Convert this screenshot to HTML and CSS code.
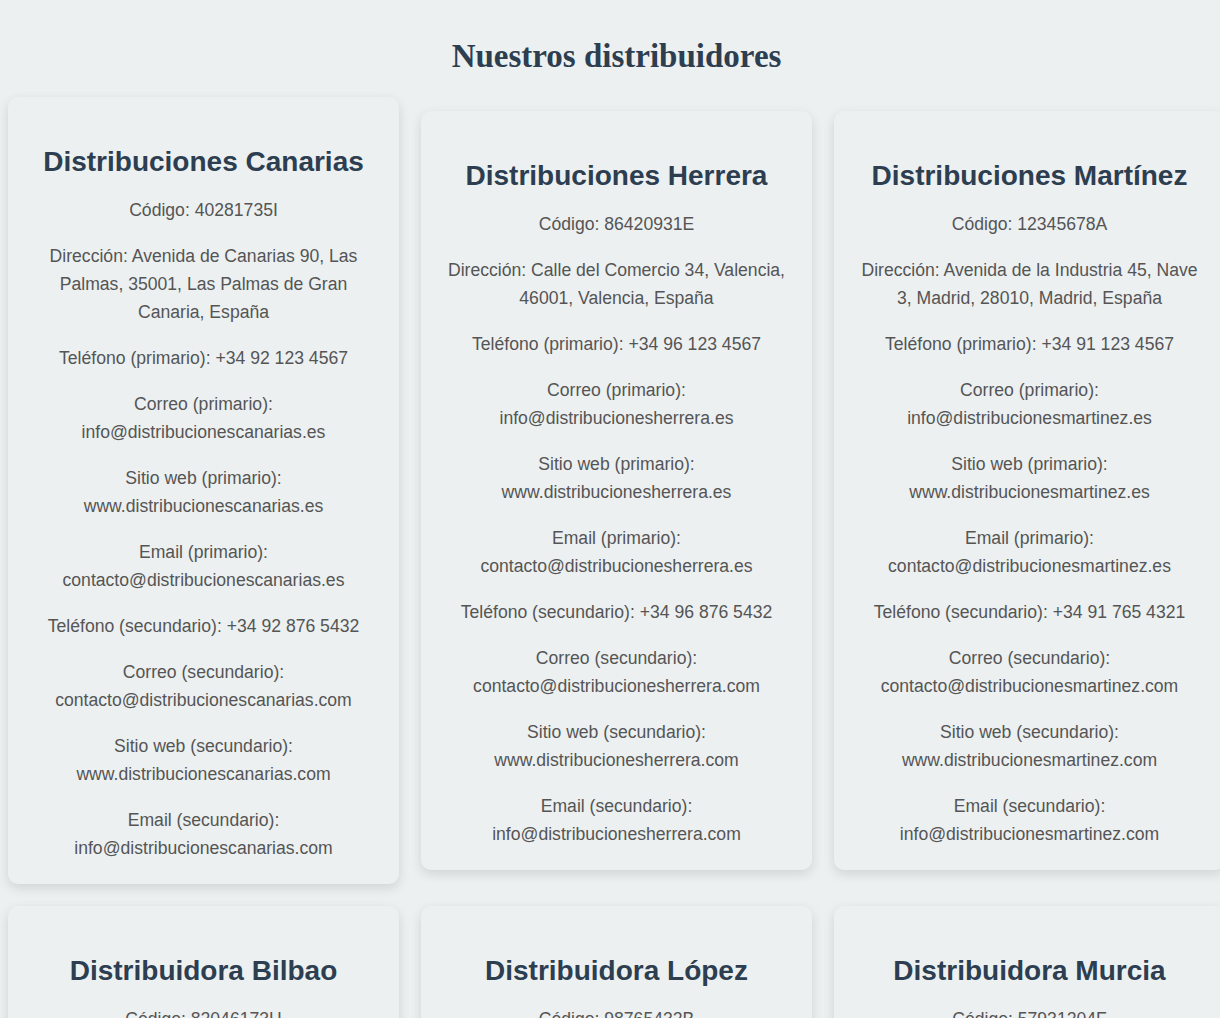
FILE: index.html
```html
<!DOCTYPE html>
<html lang="es">
<head>
<meta charset="utf-8">
<title>Nuestros distribuidores</title>
<link rel="stylesheet" href="styles.css">
</head>
<body>
<main class="page">
<h1 class="page-title">Nuestros distribuidores</h1>
<div class="grid">
  <div class="card">
    <h2 class="card-title">Distribuciones Canarias</h2>
    <p>Código: 40281735I</p>
    <p>Dirección: Avenida de Canarias 90, Las Palmas, 35001, Las Palmas de Gran Canaria, España</p>
    <p>Teléfono (primario): +34 92 123 4567</p>
    <p>Correo (primario): info@distribucionescanarias.es</p>
    <p>Sitio web (primario): www.distribucionescanarias.es</p>
    <p>Email (primario): contacto@distribucionescanarias.es</p>
    <p>Teléfono (secundario): +34 92 876 5432</p>
    <p>Correo (secundario): contacto@distribucionescanarias.com</p>
    <p>Sitio web (secundario): www.distribucionescanarias.com</p>
    <p>Email (secundario): info@distribucionescanarias.com</p>
  </div>
  <div class="card">
    <h2 class="card-title">Distribuciones Herrera</h2>
    <p>Código: 86420931E</p>
    <p>Dirección: Calle del Comercio 34, Valencia, 46001, Valencia, España</p>
    <p>Teléfono (primario): +34 96 123 4567</p>
    <p>Correo (primario): info@distribucionesherrera.es</p>
    <p>Sitio web (primario): www.distribucionesherrera.es</p>
    <p>Email (primario): contacto@distribucionesherrera.es</p>
    <p>Teléfono (secundario): +34 96 876 5432</p>
    <p>Correo (secundario): contacto@distribucionesherrera.com</p>
    <p>Sitio web (secundario): www.distribucionesherrera.com</p>
    <p>Email (secundario): info@distribucionesherrera.com</p>
  </div>
  <div class="card">
    <h2 class="card-title">Distribuciones Martínez</h2>
    <p>Código: 12345678A</p>
    <p>Dirección: Avenida de la Industria 45, Nave 3, Madrid, 28010, Madrid, España</p>
    <p>Teléfono (primario): +34 91 123 4567</p>
    <p>Correo (primario): info@distribucionesmartinez.es</p>
    <p>Sitio web (primario): www.distribucionesmartinez.es</p>
    <p>Email (primario): contacto@distribucionesmartinez.es</p>
    <p>Teléfono (secundario): +34 91 765 4321</p>
    <p>Correo (secundario): contacto@distribucionesmartinez.com</p>
    <p>Sitio web (secundario): www.distribucionesmartinez.com</p>
    <p>Email (secundario): info@distribucionesmartinez.com</p>
  </div>
  <div class="card">
    <h2 class="card-title">Distribuidora Bilbao</h2>
    <p>Código: 82046173H</p>
    <p>Dirección: Gran Vía 12, Bilbao, 48001, Vizcaya, España</p>
    <p>Teléfono (primario): +34 94 123 4567</p>
    <p>Correo (primario): info@distribuidorabilbao.es</p>
    <p>Sitio web (primario): www.distribuidorabilbao.es</p>
    <p>Email (primario): contacto@distribuidorabilbao.es</p>
    <p>Teléfono (secundario): +34 94 876 5432</p>
    <p>Correo (secundario): contacto@distribuidorabilbao.com</p>
    <p>Sitio web (secundario): www.distribuidorabilbao.com</p>
    <p>Email (secundario): info@distribuidorabilbao.com</p>
  </div>
  <div class="card">
    <h2 class="card-title">Distribuidora López</h2>
    <p>Código: 98765432B</p>
    <p>Dirección: Calle Mayor 15, Sevilla, 41001, Sevilla, España</p>
    <p>Teléfono (primario): +34 95 123 4567</p>
    <p>Correo (primario): info@distribuidoralopez.es</p>
    <p>Sitio web (primario): www.distribuidoralopez.es</p>
    <p>Email (primario): contacto@distribuidoralopez.es</p>
    <p>Teléfono (secundario): +34 95 876 5432</p>
    <p>Correo (secundario): contacto@distribuidoralopez.com</p>
    <p>Sitio web (secundario): www.distribuidoralopez.com</p>
    <p>Email (secundario): info@distribuidoralopez.com</p>
  </div>
  <div class="card">
    <h2 class="card-title">Distribuidora Murcia</h2>
    <p>Código: 57931204F</p>
    <p>Dirección: Avenida Libertad 8, Murcia, 30001, Murcia, España</p>
    <p>Teléfono (primario): +34 96 812 3456</p>
    <p>Correo (primario): info@distribuidoramurcia.es</p>
    <p>Sitio web (primario): www.distribuidoramurcia.es</p>
    <p>Email (primario): contacto@distribuidoramurcia.es</p>
    <p>Teléfono (secundario): +34 96 887 6543</p>
    <p>Correo (secundario): contacto@distribuidoramurcia.com</p>
    <p>Sitio web (secundario): www.distribuidoramurcia.com</p>
    <p>Email (secundario): info@distribuidoramurcia.com</p>
  </div>
</div>
</main>
</body>
</html>
```

FILE: styles.css
```css
html {
  overflow-x: hidden;
}

body {
  margin: 0;
  padding: 0 8px 8px;
  background: #ecf0f1;
  font-family: "Liberation Sans", Arial, sans-serif;
}

.page {
  width: max-content;
}

.page-title {
  font-family: "Liberation Serif", "Times New Roman", serif;
  font-size: 33px;
  font-weight: bold;
  color: #2c3e50;
  text-align: center;
  margin: 0;
  padding: 37.5px 0 22px;
  line-height: normal;
}

.grid {
  display: grid;
  grid-template-columns: repeat(3, 391px);
  gap: 22px;
  align-items: center;
}

.card {
  background: #ecf0f1;
  border-radius: 10px;
  box-shadow: 0 4px 12px rgba(0, 0, 0, 0.12);
  padding: 20px 20px 22px;
  text-align: center;
}

.card-title {
  font-size: 28px;
  font-weight: bold;
  color: #2c3e50;
  margin: 29px 0 17px;
  line-height: normal;
}

.card p {
  font-size: 17.6px;
  line-height: 28px;
  color: #555;
  margin: 18px 0;
}

.card p:last-child {
  margin-bottom: 0;
}
```
